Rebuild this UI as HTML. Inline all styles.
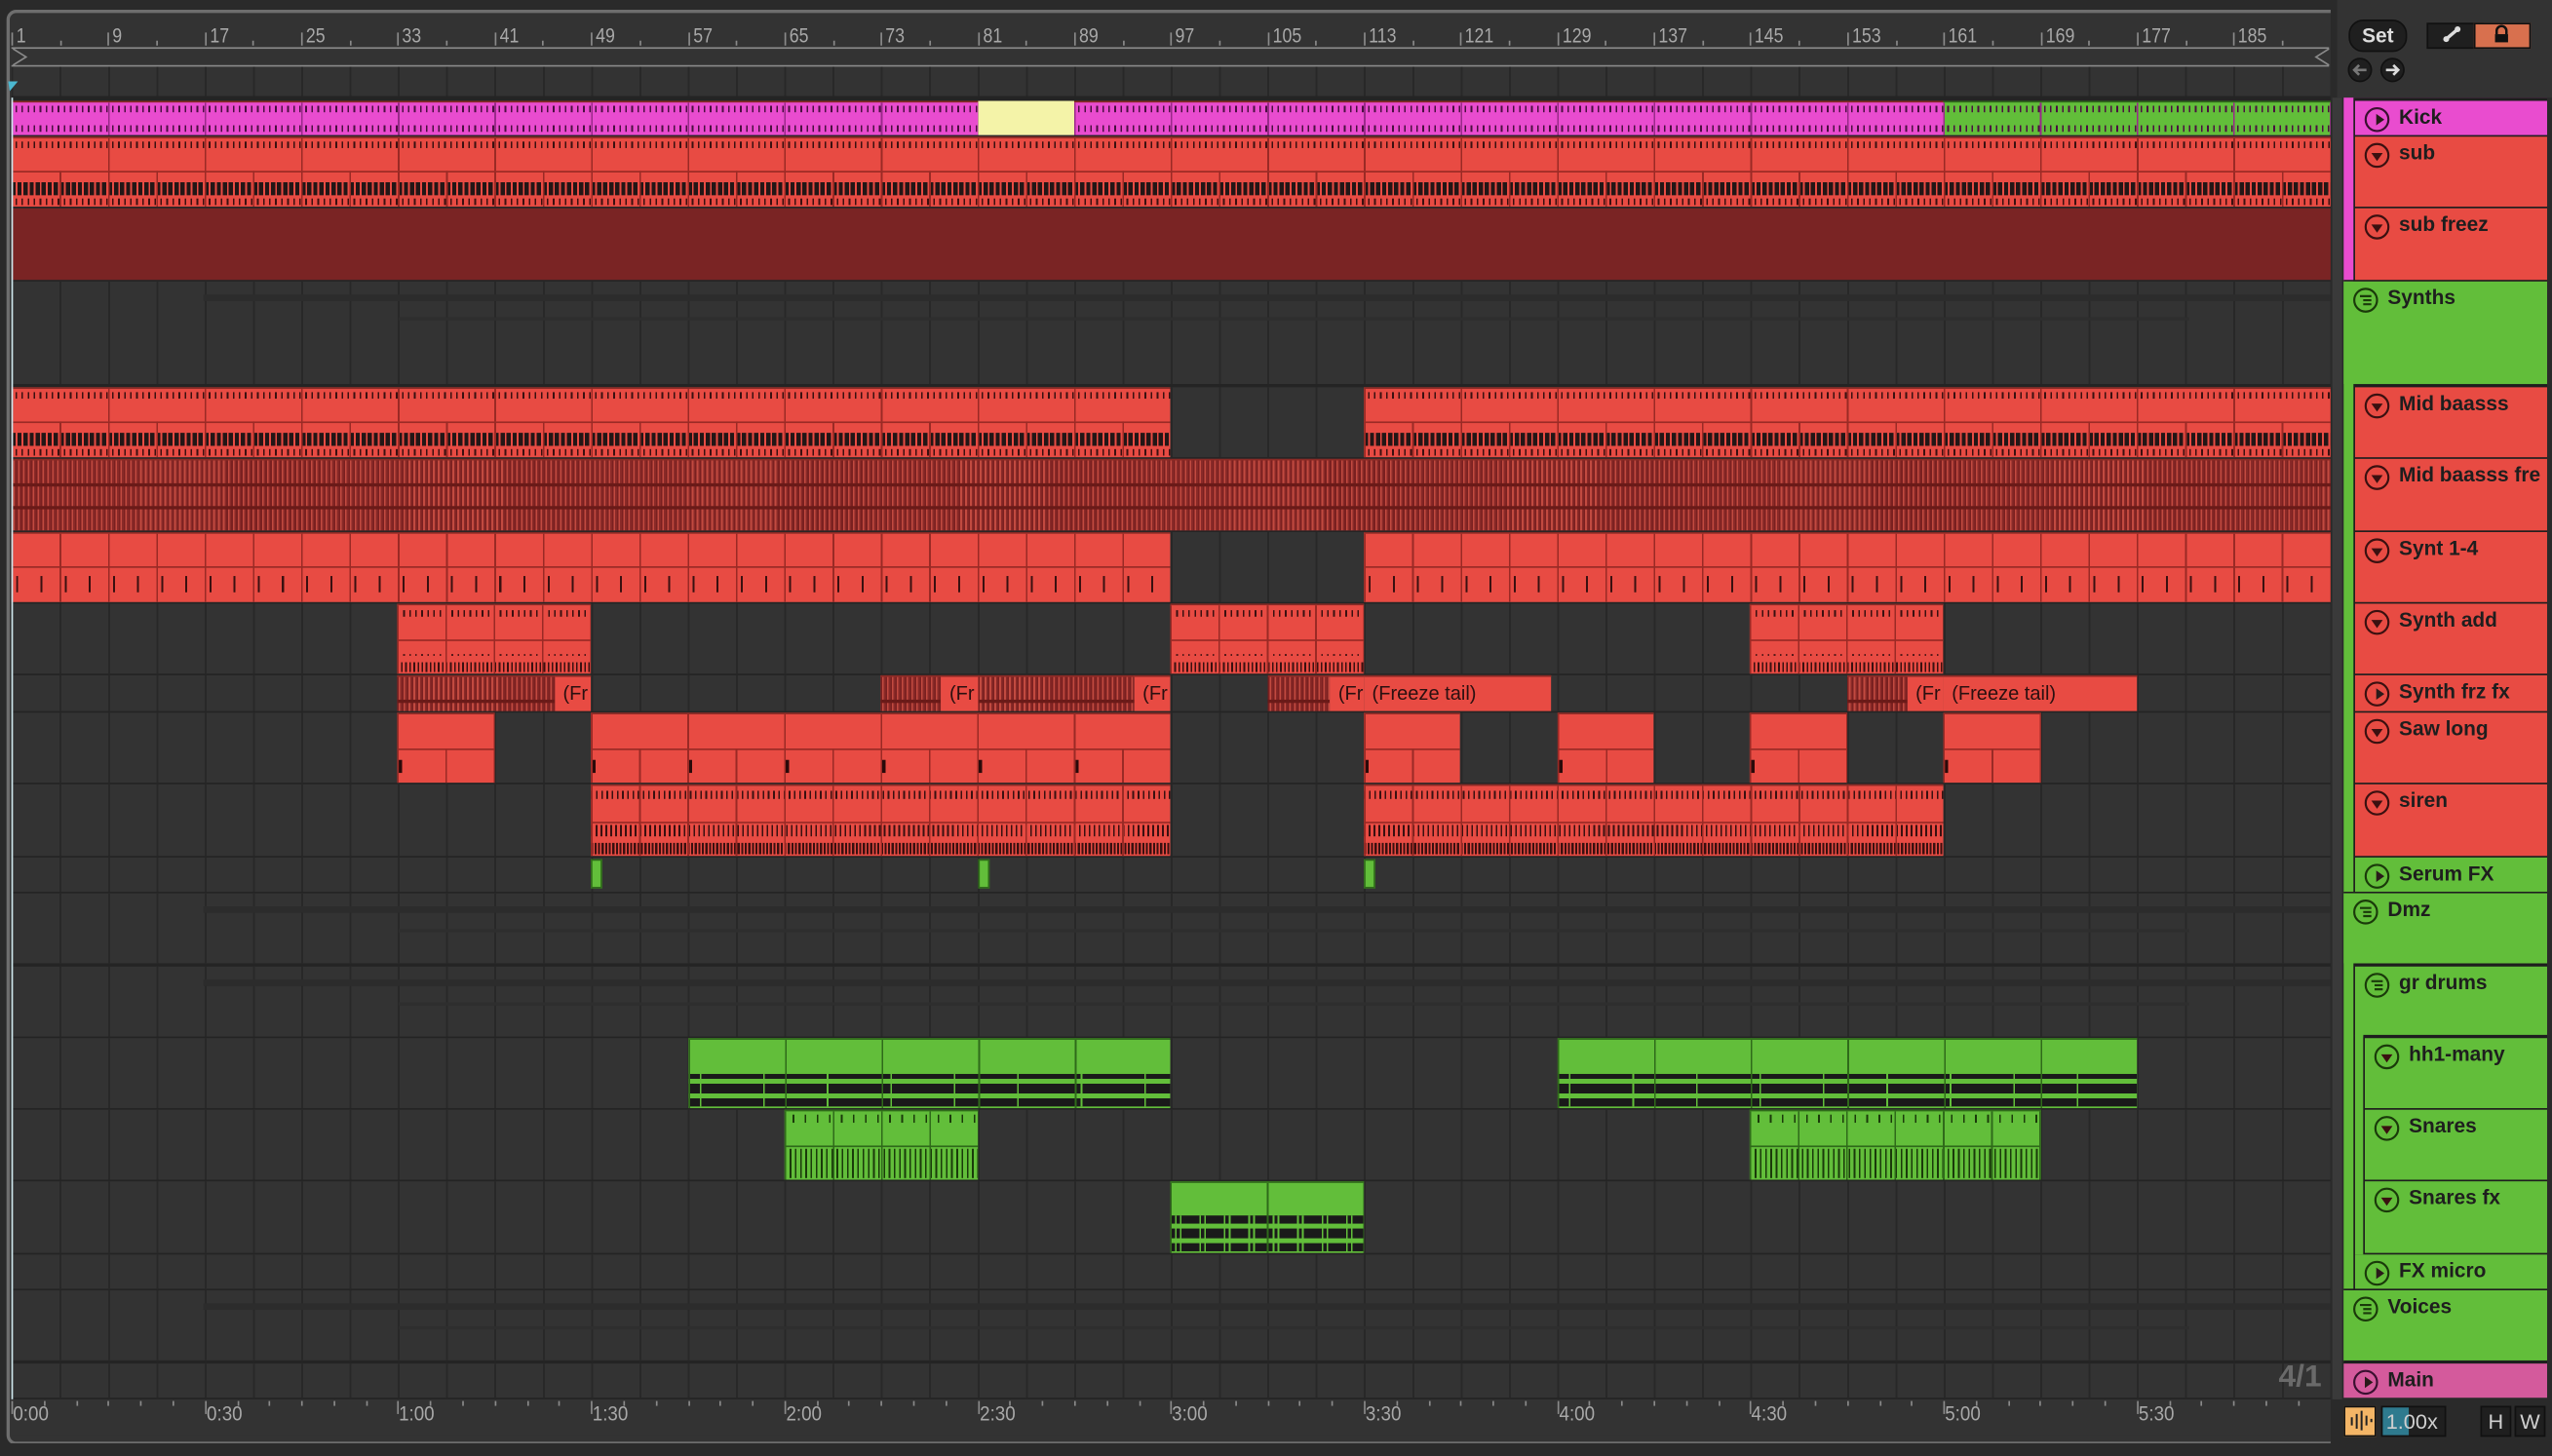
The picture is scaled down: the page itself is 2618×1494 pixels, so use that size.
<!DOCTYPE html>
<html><head><meta charset="utf-8"><style>
html,body{margin:0;padding:0;background:#2a2a2a;overflow:hidden;width:2618px;height:1494px}
#s{position:absolute;left:0;top:0;width:1568px;height:895px;transform:scale(1.669643);transform-origin:0 0;background:#2a2a2a;font-family:"Liberation Sans",sans-serif;overflow:hidden}
.a{position:absolute}
.frame{left:4px;top:6px;width:1430px;height:878px;border:2px solid #6e6e6e;border-radius:6px;background:#333}
.rl{position:absolute;top:15px;font-size:12.5px;color:#a8a8a8;transform:scaleX(.85);transform-origin:0 0}
.tl{position:absolute;top:862px;font-size:12.5px;color:#a8a8a8;transform:scaleX(.9);transform-origin:0 0}
.row{position:absolute;left:7px;width:1425px;background:#333;background-image:repeating-linear-gradient(90deg,#282828 0 1.2px,transparent 1.2px 29.68px)}
.clip{position:absolute;box-sizing:border-box;overflow:hidden}
.h{position:absolute;box-sizing:border-box;font-family:"Liberation Sans",sans-serif;font-weight:bold;font-size:12.5px;color:#1e1e1e}
.h svg{position:absolute;left:5px;top:3px}
.h span{position:absolute;left:27px;top:3px;white-space:nowrap}
.ft{color:#2a1010;font-size:12px;padding-left:5px;line-height:20px;white-space:nowrap}
</style></head><body><div id="s">
<div class="a frame"></div>
<div class="a" style="left:7px;top:59px;width:1425px;height:801px;background:#242424"></div>
<div class="a" style="left:7px;top:29px;width:1424px;height:10px;border-top:1px solid #8a8a8a;border-bottom:1px solid #8a8a8a"></div>
<svg class="a" style="left:7px;top:29px" width="1426" height="12"><path d="M1 1 L9 6 L1 11" fill="none" stroke="#8a8a8a"/><path d="M1424 1 L1416 6 L1424 11" fill="none" stroke="#8a8a8a"/></svg>
<div id="ruler"></div>
<div class="a" style="left:7px;top:41px;width:1425px;height:18px;background:#333;background-image:repeating-linear-gradient(90deg,#282828 0 1.2px,transparent 1.2px 29.68px)"></div>
<svg class="a" style="left:5px;top:50px" width="8" height="8"><path d="M0 0 L6 0 L1 6Z" fill="#4bb8d0"/></svg>
<div id="rows"></div>
<div class="a" style="left:7px;top:60px;width:1px;height:800px;background:#cfe8ee"></div>
<div class="a" style="left:1432px;top:0;width:8px;height:895px;background:#2a2a2a"></div>
<div class="a" style="left:1433px;top:60px;width:6px;height:800px;background:#3a3a3a"></div>
<div class="a" style="left:1436px;top:0;width:132px;height:60px;background:#333"></div>
<div class="a" style="left:1443px;top:12px;width:34px;height:18px;border-radius:9px;background:#1f1f1f;border:1px solid #111;color:#ddd;font-size:12.5px;font-weight:bold;text-align:center;line-height:18px">Set</div>
<div class="a" style="left:1491px;top:14px;width:33px;height:14px;background:#1f1f1f;border:1px solid #111"></div>
<svg class="a" style="left:1499px;top:15px" width="16" height="12"><path d="M4 9 L11 3" stroke="#ddd" stroke-width="2"/><circle cx="4" cy="9" r="1.8" fill="#ddd"/><circle cx="11" cy="3" r="1.8" fill="#ddd"/></svg>
<div class="a" style="left:1520px;top:14px;width:33px;height:14px;background:#d8704e;border:1px solid #111"></div>
<svg class="a" style="left:1530px;top:14px" width="14" height="14"><path d="M4 7 V5 a3 3 0 0 1 6 0 V7" fill="none" stroke="#111" stroke-width="1.5"/><rect x="3" y="7" width="8" height="5" fill="#111"/></svg>
<svg class="a" style="left:1442px;top:35px" width="40" height="16"><circle cx="8" cy="8" r="7" fill="#1f1f1f" stroke="#111"/><circle cx="28" cy="8" r="7" fill="#1f1f1f" stroke="#111"/><path d="M12 8 H5 M7.5 5 L4.5 8 L7.5 11" stroke="#777" stroke-width="1.6" fill="none"/><path d="M24 8 H31 M28.5 5 L31.5 8 L28.5 11" stroke="#ddd" stroke-width="1.6" fill="none"/></svg>
<div id="hdr"></div>
<div class="a" style="left:7px;top:860px;width:1425px;height:22px;background:#333"></div>
<div id="tm"></div>
<div class="a" style="left:1400px;top:836px;font-size:19px;font-weight:bold;color:#6a6a6a">4/1</div>
<div class="a" style="left:1440px;top:864px;width:18px;height:17px;background:#f3b566;border:1px solid #111"></div>
<svg class="a" style="left:1442px;top:866px" width="16" height="14"><path d="M3 5v5M6 3v9M9 1v12M12 4v6M15 6v2" stroke="#222" stroke-width="1.2"/></svg>
<div class="a" style="left:1463px;top:864px;width:38px;height:17px;background:#1f1f1f;border:1px solid #111"></div>
<div class="a" style="left:1464px;top:865px;width:16px;height:17px;background:#2e7a8e"></div>
<div class="a" style="left:1466px;top:865px;font-size:13px;color:#cfcfcf;line-height:17px">1.00x</div>
<div class="a" style="left:1524px;top:864px;width:17px;height:17px;background:#1f1f1f;border:1px solid #111;color:#cfcfcf;font-size:13px;text-align:center;line-height:17px">H</div>
<div class="a" style="left:1545px;top:864px;width:17px;height:17px;background:#1f1f1f;border:1px solid #111;color:#cfcfcf;font-size:13px;text-align:center;line-height:17px">W</div>
<div class="a" style="left:0;top:887px;width:1568px;height:8px;background:#2a2a2a"></div>
</div>
<script>
const X=b=>7+(b-1)*7.42;
let r='';
for(let b=1;b<=185;b+=8){r+=`<div class="rl" style="left:${X(b)+3}px">${b}</div><div class="a" style="left:${X(b)}px;top:20px;width:1px;height:8px;background:#8a8a8a"></div><div class="a" style="left:${X(b+4)}px;top:25px;width:1px;height:3px;background:#8a8a8a"></div>`;}
document.getElementById('ruler').innerHTML=r;
let t='';const tl=['0:00','0:30','1:00','1:30','2:00','2:30','3:00','3:30','4:00','4:30','5:00','5:30'];
tl.forEach((s,i)=>{const x=7+i*118.7;t+=`<div class="tl" style="left:${x+1}px">${s}</div><div class="a" style="left:${x}px;top:861px;width:1px;height:8px;background:#8a8a8a"></div>`;for(let k=1;k<6;k++)t+=`<div class="a" style="left:${x+k*19.8}px;top:861px;width:1px;height:3px;background:#8a8a8a"></div>`;});
document.getElementById('tm').innerHTML=t;
const rows=[[62,21],[84,43],[128,44],[173,63],[238,43],[282,44],[327,43],[371,43],[415,22],[438,43],[482,44],[527,21],[549,43],[594,43],[638,43],[682,43],[726,44],[771,21],[793,43],[838,21]];
const RED='#e84b43',PINK='#e94ccf',GRN='#62be3a';
let h='';
rows.forEach(([y,hh],i)=>{h+=`<div class="row" style="top:${y}px;height:${hh}px"></div>`;
 if([3,12,13,18].includes(i)){h+=`<div class="a" style="left:125px;top:${y+8}px;width:1307px;height:4px;background:#2c2c2c"></div><div class="a" style="left:245px;top:${y+22}px;width:1100px;height:2px;background:#2e2e2e"></div>`}});
function clip(ri,b1,b2,col,kind,txt){const [y,hh]=rows[ri];const x=X(b1),w=X(b2)-x;let bg=col,ex='';
 const dk=col==GRN?'#2f6a1a':'#8a2a25';
 if(kind=='kick'){ex=`<div class="a" style="left:0;top:2px;width:100%;height:4px;background-image:repeating-linear-gradient(90deg,transparent 0 2.5px,#4a1040 2.5px 3.5px,transparent 3.5px 3.71px)"></div><div class="a" style="left:0;bottom:2px;width:100%;height:4px;background-image:repeating-linear-gradient(90deg,transparent 0 2.5px,#4a1040 2.5px 3.5px,transparent 3.5px 3.71px)"></div><div class="a" style="left:0;top:0;width:100%;height:100%;background-image:repeating-linear-gradient(90deg,#9a2a8a 0 1px,transparent 1px 59.36px)"></div>`}
 if(kind=='sub'){ex=`<div class="a" style="left:0;top:2px;width:100%;height:4px;background-image:repeating-linear-gradient(90deg,transparent 0 2.5px,#3a1010 2.5px 3.5px,transparent 3.5px 3.71px)"></div><div class="a" style="left:0;top:20px;width:100%;height:1px;background:#9a2a25"></div><div class="a" style="left:0;top:27px;width:100%;height:8px;background-image:repeating-linear-gradient(90deg,#231616 0 2.6px,${col} 2.6px 3.71px)"></div><div class="a" style="left:0;bottom:1px;width:100%;height:4px;background-image:repeating-linear-gradient(90deg,transparent 0 2.5px,#3a1010 2.5px 3.5px,transparent 3.5px 3.71px)"></div><div class="a" style="left:0;top:0;width:100%;height:20px;background-image:repeating-linear-gradient(90deg,#9a2a25 0 1px,transparent 1px 59.36px)"></div><div class="a" style="left:0;top:20px;width:100%;height:24px;background-image:repeating-linear-gradient(90deg,#9a2a25 0 1px,transparent 1px 29.68px)"></div>`}
 if(kind=='stripe'){bg='#9a3030';ex=`<div class="a" style="left:0;top:0;width:100%;height:100%;background-image:repeating-linear-gradient(90deg,#7a2020 0 1px,#c24a40 1px 2px,#8a2a28 2px 3px)"></div><div class="a" style="left:0;top:14px;width:100%;height:2px;background:#6a1a18"></div><div class="a" style="left:0;top:28px;width:100%;height:2px;background:#6a1a18"></div>`}
 if(kind=='synt'){ex=`<div class="a" style="left:0;top:20px;width:100%;height:1px;background:#9a2a25"></div><div class="a" style="left:0;top:0;width:100%;height:100%;background-image:repeating-linear-gradient(90deg,#9a2a25 0 1px,transparent 1px 29.68px)"></div><div class="a" style="left:3px;top:26px;width:100%;height:10px;background-image:repeating-linear-gradient(90deg,#3a1010 0 1.2px,transparent 1.2px 14.84px)"></div>`}
 if(kind=='add'){ex=`<div class="a" style="left:0;top:3px;width:100%;height:4px;background-image:repeating-linear-gradient(90deg,#3a1010 0 1px,transparent 1px 3.71px)"></div><div class="a" style="left:0;top:21px;width:100%;height:1px;background:#9a2a25"></div><div class="a" style="left:0;top:30px;width:100%;height:1px;background-image:repeating-linear-gradient(90deg,#3a1010 0 1px,transparent 1px 3.71px)"></div><div class="a" style="left:0;bottom:1px;width:100%;height:6px;background-image:repeating-linear-gradient(90deg,#3a1010 0 1px,transparent 1px 2.5px)"></div><div class="a" style="left:0;top:0;width:100%;height:100%;background-image:repeating-linear-gradient(90deg,#9a2a25 0 1px,transparent 1px 29.68px)"></div>`}
 if(kind=='saw'){ex=`<div class="a" style="left:0;top:21px;width:100%;height:1px;background:#9a2a25"></div><div class="a" style="left:0;top:0;width:100%;height:21px;background-image:repeating-linear-gradient(90deg,#9a2a25 0 1px,transparent 1px 59.36px)"></div><div class="a" style="left:0;top:21px;width:100%;height:22px;background-image:repeating-linear-gradient(90deg,#9a2a25 0 1px,transparent 1px 29.68px)"></div><div class="a" style="left:1px;top:28px;width:100%;height:8px;background-image:repeating-linear-gradient(90deg,#2a0a0a 0 2px,transparent 2px 59.36px)"></div>`}
 if(kind=='siren'){ex=`<div class="a" style="left:0;top:3px;width:100%;height:5px;background-image:repeating-linear-gradient(90deg,#3a1010 0 1px,transparent 1px 3.2px)"></div><div class="a" style="left:0;top:22px;width:100%;height:1px;background:#9a2a25"></div><div class="a" style="left:0;top:24px;width:100%;height:7px;background-image:repeating-linear-gradient(90deg,#3a1010 0 1px,transparent 1px 3px)"></div><div class="a" style="left:0;bottom:1px;width:100%;height:7px;background-image:repeating-linear-gradient(90deg,#3a1010 0 1.3px,transparent 1.3px 2.2px)"></div><div class="a" style="left:0;top:0;width:100%;height:100%;background-image:repeating-linear-gradient(90deg,#9a2a25 0 1px,transparent 1px 29.68px)"></div>`}
 if(kind=='hh'){ex=`<div class="a" style="left:0;top:21px;width:100%;height:20px;background:#1a1a1a"></div><div class="a" style="left:0;top:24px;width:100%;height:3px;background:${GRN}"></div><div class="a" style="left:0;top:33px;width:100%;height:3px;background:${GRN}"></div><div class="a" style="left:0;top:20px;width:100%;height:21px;background-image:repeating-linear-gradient(90deg,transparent 0 7px,${GRN} 7px 8px,transparent 8px 39px)"></div><div class="a" style="left:0;top:0;width:100%;height:100%;background-image:repeating-linear-gradient(90deg,#2f6a1a 0 1px,transparent 1px 59.36px)"></div>`}
 if(kind=='sn'){ex=`<div class="a" style="left:0;top:2px;width:100%;height:5px;background-image:repeating-linear-gradient(90deg,transparent 0 5px,#1a3a0a 5px 6px,transparent 6px 7.42px)"></div><div class="a" style="left:0;top:21px;width:100%;height:1px;background:#2f6a1a"></div><div class="a" style="left:0;top:23px;width:100%;height:18px;background-image:repeating-linear-gradient(90deg,#1a3a0a 0 1px,transparent 1px 3.2px)"></div><div class="a" style="left:0;top:0;width:100%;height:100%;background-image:repeating-linear-gradient(90deg,#2f6a1a 0 1px,transparent 1px 29.68px)"></div>`}
 if(kind=='snfx'){ex=`<div class="a" style="left:0;top:20px;width:100%;height:22px;background:#1a1a1a"></div><div class="a" style="left:0;top:25px;width:100%;height:3px;background:${GRN}"></div><div class="a" style="left:0;top:34px;width:100%;height:3px;background:${GRN}"></div><div class="a" style="left:0;top:20px;width:100%;height:22px;background-image:repeating-linear-gradient(90deg,transparent 0 3px,${GRN} 3px 4px,transparent 4px 6px,${GRN} 6px 7px,transparent 7px 15px)"></div><div class="a" style="left:0;top:0;width:100%;height:100%;background-image:repeating-linear-gradient(90deg,#2f6a1a 0 1px,transparent 1px 59.36px)"></div>`}
 h+=`<div class="clip" style="left:${x}px;top:${y}px;width:${w}px;height:${hh}px;background:${bg};border-top:1px solid ${dk}">${ex}${txt?`<div class="a ft">${txt}</div>`:''}</div>`;}
const END=193.1;
clip(0,1,END,PINK,'kick');
h+=`<div class="clip" style="left:${X(81)}px;top:62px;width:${X(89)-X(81)}px;height:21px;background:#f4f3a8"></div>`;
clip(0,161,END,GRN,'kick');
clip(1,1,END,RED,'sub');
h+=`<div class="clip" style="left:7px;top:128px;width:1425px;height:44px;background:#7a2424"></div>`;
[[1,97],[113,END]].forEach(([a,b])=>{clip(4,a,b,RED,'sub');clip(6,a,b,RED,'synt')});
clip(5,1,END,RED,'stripe');
[[33,49],[97,113],[145,161]].forEach(([a,b])=>clip(7,a,b,RED,'add'));
[[33,46],[73,78],[81,94],[105,110.2],[153,158]].forEach(([a,b])=>clip(8,a,b,RED,'stripe'));
[[46,49,'(Fr'],[78,81,'(Fr'],[94,97,'(Fr'],[110.2,113,'(Fr'],[113,128.5,'(Freeze tail)'],[158,161,'(Fr'],[161,177,'(Freeze tail)']].forEach(([a,b,s])=>clip(8,a,b,RED,'',s));
[[33,41],[49,97],[113,121],[129,137],[145,153],[161,169]].forEach(([a,b])=>clip(9,a,b,RED,'saw'));
[[49,97],[113,161]].forEach(([a,b])=>clip(10,a,b,RED,'siren'));
[49,81,113].forEach(b=>{h+=`<div class="clip" style="left:${X(b)}px;top:528px;width:7px;height:18px;background:${GRN};border:1px solid #2f6a1a"></div>`});
[[57,97],[129,177]].forEach(([a,b])=>clip(14,a,b,GRN,'hh'));
[[65,81],[145,169]].forEach(([a,b])=>clip(15,a,b,GRN,'sn'));
clip(16,97,113,GRN,'snfx');
document.getElementById('rows').innerHTML=h;
const ic={play:'<path d="M8 5 L13 8.5 L8 12Z" fill="#2a1a1a"/>',down:'<path d="M5 7 L12 7 L8.5 12Z" fill="#3a1010"/>',grp:'<path d="M5 6H12M7 8.5H12M7 11H12" stroke="#1a3a0a" stroke-width="1.3"/>'};
function H(x,y,w,hh,col,icon,name,sc){return `<div class="h" style="left:${x}px;top:${y}px;width:${w}px;height:${hh}px;background:${col}"><svg width="17" height="17"><circle cx="8.5" cy="8.5" r="7" fill="none" stroke="${sc}" stroke-width="1.3"/>${ic[icon]}</svg><span>${name}</span></div>`}
let g='';
g+=`<div class="a" style="left:1440px;top:60px;width:125px;height:113px;background:${PINK}"></div>`;
g+=`<div class="a" style="left:1440px;top:173px;width:125px;height:376px;background:${GRN}"></div>`;
g+=`<div class="a" style="left:1440px;top:549px;width:125px;height:244px;background:${GRN}"></div>`;
g+=`<div class="a" style="left:1440px;top:793px;width:125px;height:44px;background:${GRN}"></div>`;
g+=`<div class="a" style="left:1446px;top:60px;width:119px;height:113px;background:#1e1e1e"></div>`;
g+=`<div class="a" style="left:1446px;top:236px;width:119px;height:313px;background:#1e1e1e"></div>`;
g+=`<div class="a" style="left:1446px;top:592px;width:119px;height:201px;background:#1e1e1e"></div>`;
g+=`<div class="a" style="left:1440px;top:172px;width:125px;height:1px;background:#1e1e1e"></div>`;
g+=`<div class="a" style="left:1440px;top:548px;width:125px;height:1px;background:#1e1e1e"></div>`;
g+=`<div class="a" style="left:1440px;top:792px;width:125px;height:1px;background:#1e1e1e"></div>`;
g+=`<div class="a" style="left:1440px;top:836px;width:125px;height:2px;background:#1e1e1e"></div>`;
g+=H(1447,62,118,21,PINK,'play','Kick','#3a1030');
g+=H(1447,84,118,43,RED,'down','sub','#3a1010');
g+=H(1447,128,118,44,RED,'down','sub freez','#3a1010');
g+=H(1440,173,125,63,GRN,'grp','Synths','#1a3a0a');
[[238,43,'Mid baasss'],[282,44,'Mid baasss fre'],[327,43,'Synt 1-4'],[371,43,'Synth add']].forEach(([y,hh,n])=>g+=H(1447,y,118,hh,RED,'down',n,'#3a1010'));
g+=H(1447,415,118,22,RED,'play','Synth frz fx','#3a1010');
g+=H(1447,438,118,43,RED,'down','Saw long','#3a1010');
g+=H(1447,482,118,44,RED,'down','siren','#3a1010');
g+=H(1447,527,118,21,GRN,'play','Serum FX','#1a3a0a');
g+=H(1440,549,125,43,GRN,'grp','Dmz','#1a3a0a');
g+=H(1447,594,118,43,GRN,'grp','gr drums','#1a3a0a');
g+=`<div class="a" style="left:1452px;top:636px;width:113px;height:134px;background:#1e1e1e"></div>`;
g+=H(1453,638,112,43,GRN,'down','hh1-many','#1a3a0a');
g+=H(1453,682,112,43,GRN,'down','Snares','#1a3a0a');
g+=H(1453,726,112,44,GRN,'down','Snares fx','#1a3a0a');
g+=`<div class="a" style="left:1447px;top:636px;width:5px;height:135px;background:${GRN}"></div>`;
g+=H(1447,771,118,21,GRN,'play','FX micro','#1a3a0a');
g+=H(1440,793,125,43,GRN,'grp','Voices','#1a3a0a');
g+=H(1440,838,125,21,'#d45a9c','play','Main','#3a1030');
document.getElementById('hdr').innerHTML=g;
</script>
</body></html>
